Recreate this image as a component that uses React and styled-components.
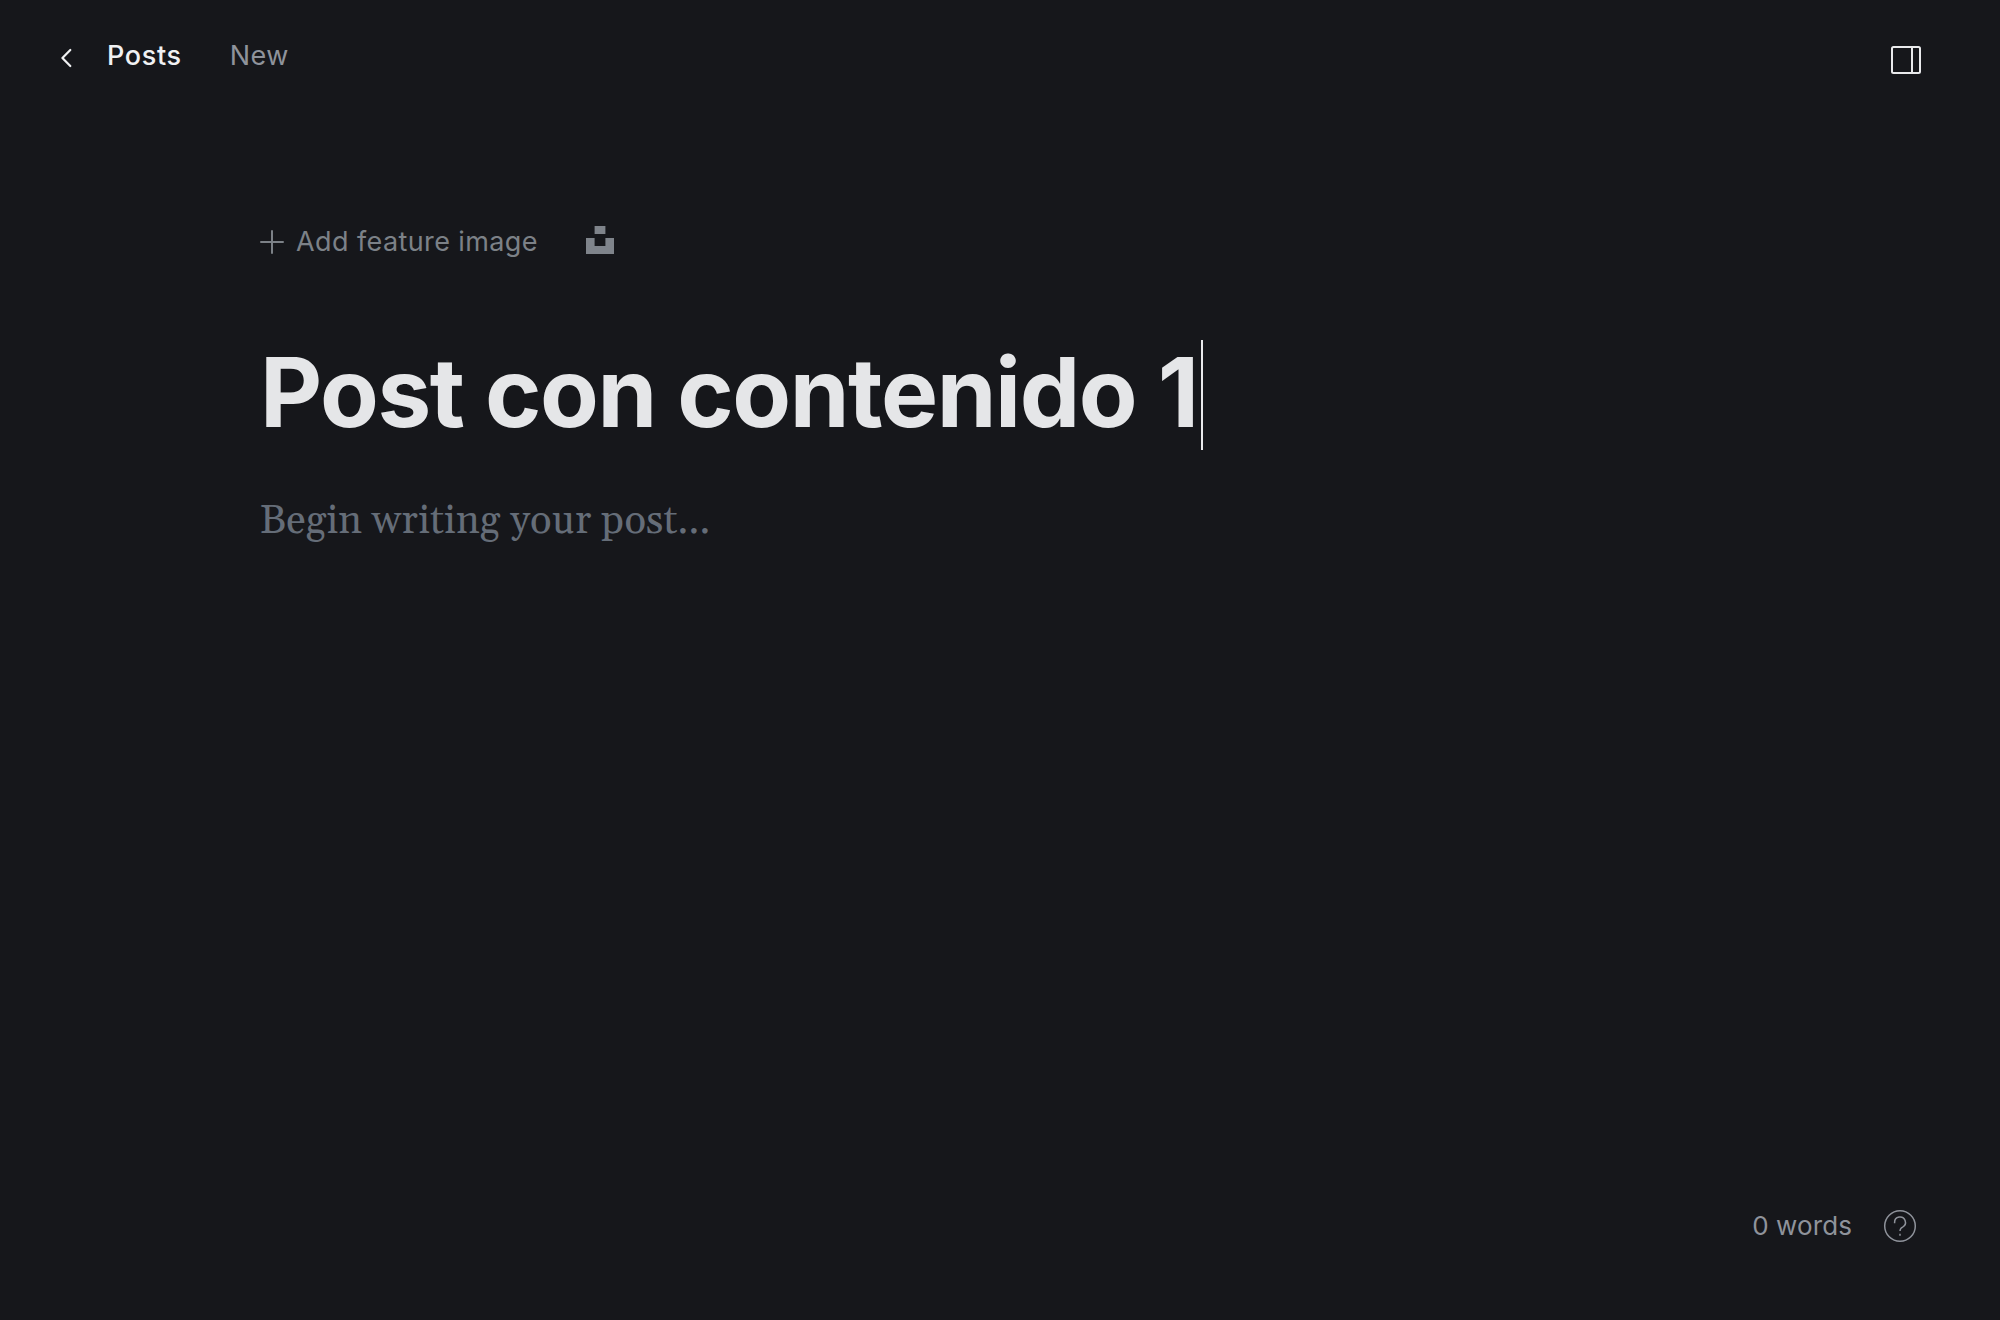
import React from 'react';
import styled, { createGlobalStyle } from 'styled-components';

const Global = createGlobalStyle`
  *{box-sizing:border-box}
  body{margin:0;background:#16171b}
`;
const Page = styled.div`
  height:1320px;display:flex;flex-direction:column;justify-content:space-between;
  background:#16171b;font-family:Inter,sans-serif;color:#7c8187;overflow:hidden;
`;
const Header = styled.header`
  display:flex;align-items:center;justify-content:space-between;height:56px;margin:28px 78px 0 60px;
`;
const Nav = styled.nav`display:flex;align-items:center;`;
const BackIcon = styled.svg`margin-top:4px;`;
const PanelIcon = styled.svg`margin-top:8px;`;
const Crumb = styled.span`
  font-size:27px;line-height:56px;letter-spacing:${p => (p.$active ? 0.65 : 0.5)}px;white-space:nowrap;
  font-weight:${p => (p.$active ? 500 : 400)};color:${p => (p.$active ? '#f0f1f3' : '#8f939b')};
  margin-left:${p => p.$gap}px;
`;
const Editor = styled.main`flex:1;padding:129px 260px 0;`;
const Feature = styled.div`display:flex;align-items:center;height:56px;font-size:27px;letter-spacing:.4px;`;
const PlusIcon = styled.svg`margin-top:2px;`;
const UnsplashIcon = styled.svg`margin-bottom:2px;`;
const FeatureLabel = styled.span`margin:0 48px 0 12px;white-space:nowrap;`;
const TitleRow = styled.div`display:flex;align-items:center;height:110px;margin-top:71px;`;
const Title = styled.h1`margin:0;padding-bottom:6px;font-size:96px;font-weight:700;letter-spacing:-1.4px;line-height:104px;color:#e5e6e8;white-space:nowrap;`;
const Caret = styled.span`width:2px;height:110px;margin-left:3px;background:#e9eaec;`;
const Body = styled.p`margin:46px 0 0;font-family:Georgia,Gelasio,"Liberation Serif",serif;font-size:40px;letter-spacing:.18px;line-height:52px;color:#656d78;white-space:nowrap;`;
const Footer = styled.footer`display:flex;align-items:center;justify-content:flex-end;height:56px;margin:0 83px 66px 0;gap:31px;font-size:26px;letter-spacing:.1px;color:#8f939b;`;
const WordCount = styled.span`padding-bottom:2px;`;

export default function App() {
  return (
    <Page>
      <Global />
      <Header>
        <Nav>
          <BackIcon width="14" height="20" fill="none" stroke="#f0f1f3" strokeWidth="2.2" strokeLinecap="round" strokeLinejoin="round"><path d="M10.3 2 2.4 10l7.9 8" /></BackIcon>
          <Crumb $active $gap={33}>Posts</Crumb>
          <Crumb $gap={48}>New</Crumb>
        </Nav>
        <PanelIcon width="32" height="32" fill="none" stroke="#e9eaec" strokeWidth="2"><rect x="2" y="3" width="28" height="26" rx="1.5" /><path d="M22 3v26" /></PanelIcon>
      </Header>
      <Editor>
        <Feature>
          <PlusIcon width="24" height="24" stroke="#7c8187" strokeWidth="2" strokeLinecap="round"><path d="M12 1v22M1 12h22" /></PlusIcon>
          <FeatureLabel>Add feature image</FeatureLabel>
          <UnsplashIcon width="28" height="28" fill="#7f848b"><path d="M8.6 0h10.8v8H8.6zM0 12h8.6v8h10.8v-8H28v16H0z" /></UnsplashIcon>
        </Feature>
        <TitleRow><Title>Post con contenido 1</Title><Caret /></TitleRow>
        <Body>Begin writing your post...</Body>
      </Editor>
      <Footer>
        <WordCount>0 words</WordCount>
        <svg width="34" height="34" fill="none" stroke="#8f939b" strokeWidth="1.5"><circle cx="17" cy="17" r="15.3" /><path d="M11.6 14.2v-.7a5.4 5.4 0 1 1 8 4.6Q17 19.4 17 22M17 24.8v2" /></svg>
      </Footer>
    </Page>
  );
}
